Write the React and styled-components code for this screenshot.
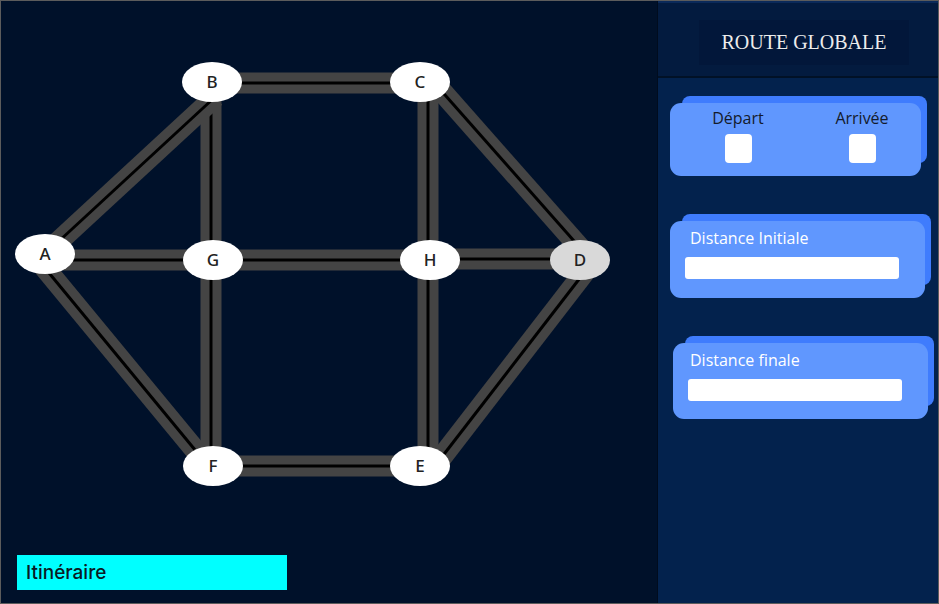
import styled, { createGlobalStyle } from "styled-components";

const GlobalStyle = createGlobalStyle`
  html, body {
    margin: 0;
    padding: 0;
    background: #00112a;
  }
  * {
    box-sizing: border-box;
  }
`;

const nodes = [
  { id: "A", x: 45, y: 254 },
  { id: "B", x: 212, y: 82 },
  { id: "C", x: 420, y: 82 },
  { id: "D", x: 580, y: 260, visited: true },
  { id: "E", x: 420, y: 466 },
  { id: "F", x: 213, y: 466 },
  { id: "G", x: 213, y: 260 },
  { id: "H", x: 430, y: 260 },
];

// each road: [x1, y1, x2, y2]
const roads = [
  [212, 83, 420, 83],
  [211, 82, 211, 260],
  [211, 260, 211, 466],
  [428, 82, 428, 260],
  [428, 260, 428, 466],
  [45, 260, 213, 260],
  [213, 260, 430, 260],
  [430, 259, 580, 259],
  [213, 466, 420, 466],
  [45, 254, 215, 97],
  [40, 262, 205, 462],
  [430, 78, 582, 250],
  [438, 462, 590, 265],
];

function App() {
  return (
    <>
      <GlobalStyle />
      <Frame>
        <MapPanel>
          <Graph viewBox="1 1 656 500" width="656" height="500">
            {roads.map(([x1, y1, x2, y2], i) => (
              <g key={i}>
                <line x1={x1} y1={y1} x2={x2} y2={y2} stroke="#444" strokeWidth="21" />
                <line x1={x1} y1={y1} x2={x2} y2={y2} stroke="#000" strokeWidth="3" />
              </g>
            ))}
            {nodes.map((n) => (
              <g key={n.id}>
                <ellipse cx={n.x} cy={n.y} rx="30" ry="20" fill={n.visited ? "#d9d9d9" : "#fff"} />
                <NodeLabel x={n.x} y={n.y + 6} textAnchor="middle">
                  {n.id}
                </NodeLabel>
              </g>
            ))}
          </Graph>
          <RouteButton>Itinéraire</RouteButton>
        </MapPanel>

        <Sidebar>
          <Header>
            <TitleBox>Route Globale</TitleBox>
          </Header>
          <Cards>
            <Card $left={12} $width={251} $height={73}>
              <EndpointRow>
                <Endpoint>
                  <EndpointLabel>Départ</EndpointLabel>
                  <Check />
                </Endpoint>
                <Endpoint>
                  <EndpointLabel>Arrivée</EndpointLabel>
                  <Check />
                </Endpoint>
              </EndpointRow>
            </Card>
            <Card $left={12} $width={255} $height={77} $top={45}>
              <FieldLabel>Distance Initiale</FieldLabel>
              <DistanceInput />
            </Card>
            <Card $left={15} $width={255} $height={76} $top={45}>
              <FieldLabel $shift={3}>Distance finale</FieldLabel>
              <DistanceInput />
            </Card>
          </Cards>
        </Sidebar>
      </Frame>
    </>
  );
}
export default App;

const Frame = styled.div`
  width: 939px;
  height: 604px;
  display: flex;
  border: 1px solid #5c5c5c;
  background: #00112a;
  overflow: hidden;
`;

const MapPanel = styled.div`
  width: 656px;
  display: flex;
  flex-direction: column;
  justify-content: space-between;
  padding-bottom: 13px;
  background: #00112a;
`;

const Graph = styled.svg`
  display: block;
`;

const NodeLabel = styled.text`
  font-family: "Noto Sans", "Open Sans", sans-serif;
  font-size: 17px;
  font-weight: 500;
  fill: #222;
`;

const RouteButton = styled.div`
  width: 270px;
  height: 35px;
  margin-left: 16px;
  padding-left: 9px;
  display: flex;
  align-items: center;
  background: #00ffff;
  color: #0a1a24;
  font-family: "Inter", "Noto Sans", sans-serif;
  font-size: 19px;
  font-weight: 500;
`;

const Sidebar = styled.div`
  flex: 1;
  display: flex;
  flex-direction: column;
  background: #03224d;
  border-left: 1px solid #000c1e;
`;

const Header = styled.div`
  height: 77px;
  padding: 17px 29px 0 41px;
  background: #031b3f;
  border-top: 2px solid #0b2a5a;
  border-bottom: 2px solid #011126;
`;

const TitleBox = styled.div`
  height: 45px;
  display: flex;
  align-items: center;
  justify-content: center;
  background: #02173a;
  color: #ececec;
  font-family: "Liberation Serif", "DejaVu Serif", serif;
  font-size: 20px;
  text-transform: uppercase;
`;

const Cards = styled.div`
  display: flex;
  flex-direction: column;
  padding-top: 25px;
`;

const Card = styled.div`
  width: ${(p) => p.$width}px;
  height: ${(p) => p.$height}px;
  margin-left: ${(p) => p.$left}px;
  margin-top: ${(p) => p.$top || 0}px;
  display: flex;
  flex-direction: column;
  padding: 6px 0 0 15px;
  background: #6097fe;
  border-radius: 11px;
  box-shadow: 9px -10px 0 -3px #3f7cfd;
`;

const EndpointRow = styled.div`
  display: flex;
  gap: 24px;
  padding-left: 3px;
  margin-top: -2px;
`;

const Endpoint = styled.div`
  width: 100px;
  display: flex;
  flex-direction: column;
  align-items: center;
`;

const EndpointLabel = styled.div`
  font-family: "Open Sans", "Noto Sans", sans-serif;
  font-size: 16px;
  line-height: 22px;
  color: #141b2b;
`;

const Check = styled.div`
  width: 27px;
  height: 29px;
  margin-top: 5px;
  background: #fff;
  border-radius: 4px;
`;

const FieldLabel = styled.div`
  margin-left: ${(p) => 5 - (p.$shift || 0)}px;
  font-family: "Open Sans", "Noto Sans", sans-serif;
  font-size: 16px;
  line-height: 22px;
  color: #fff;
`;

const DistanceInput = styled.div`
  width: 214px;
  height: 22px;
  margin-top: 8px;
  background: #fff;
  border-radius: 3px;
`;
